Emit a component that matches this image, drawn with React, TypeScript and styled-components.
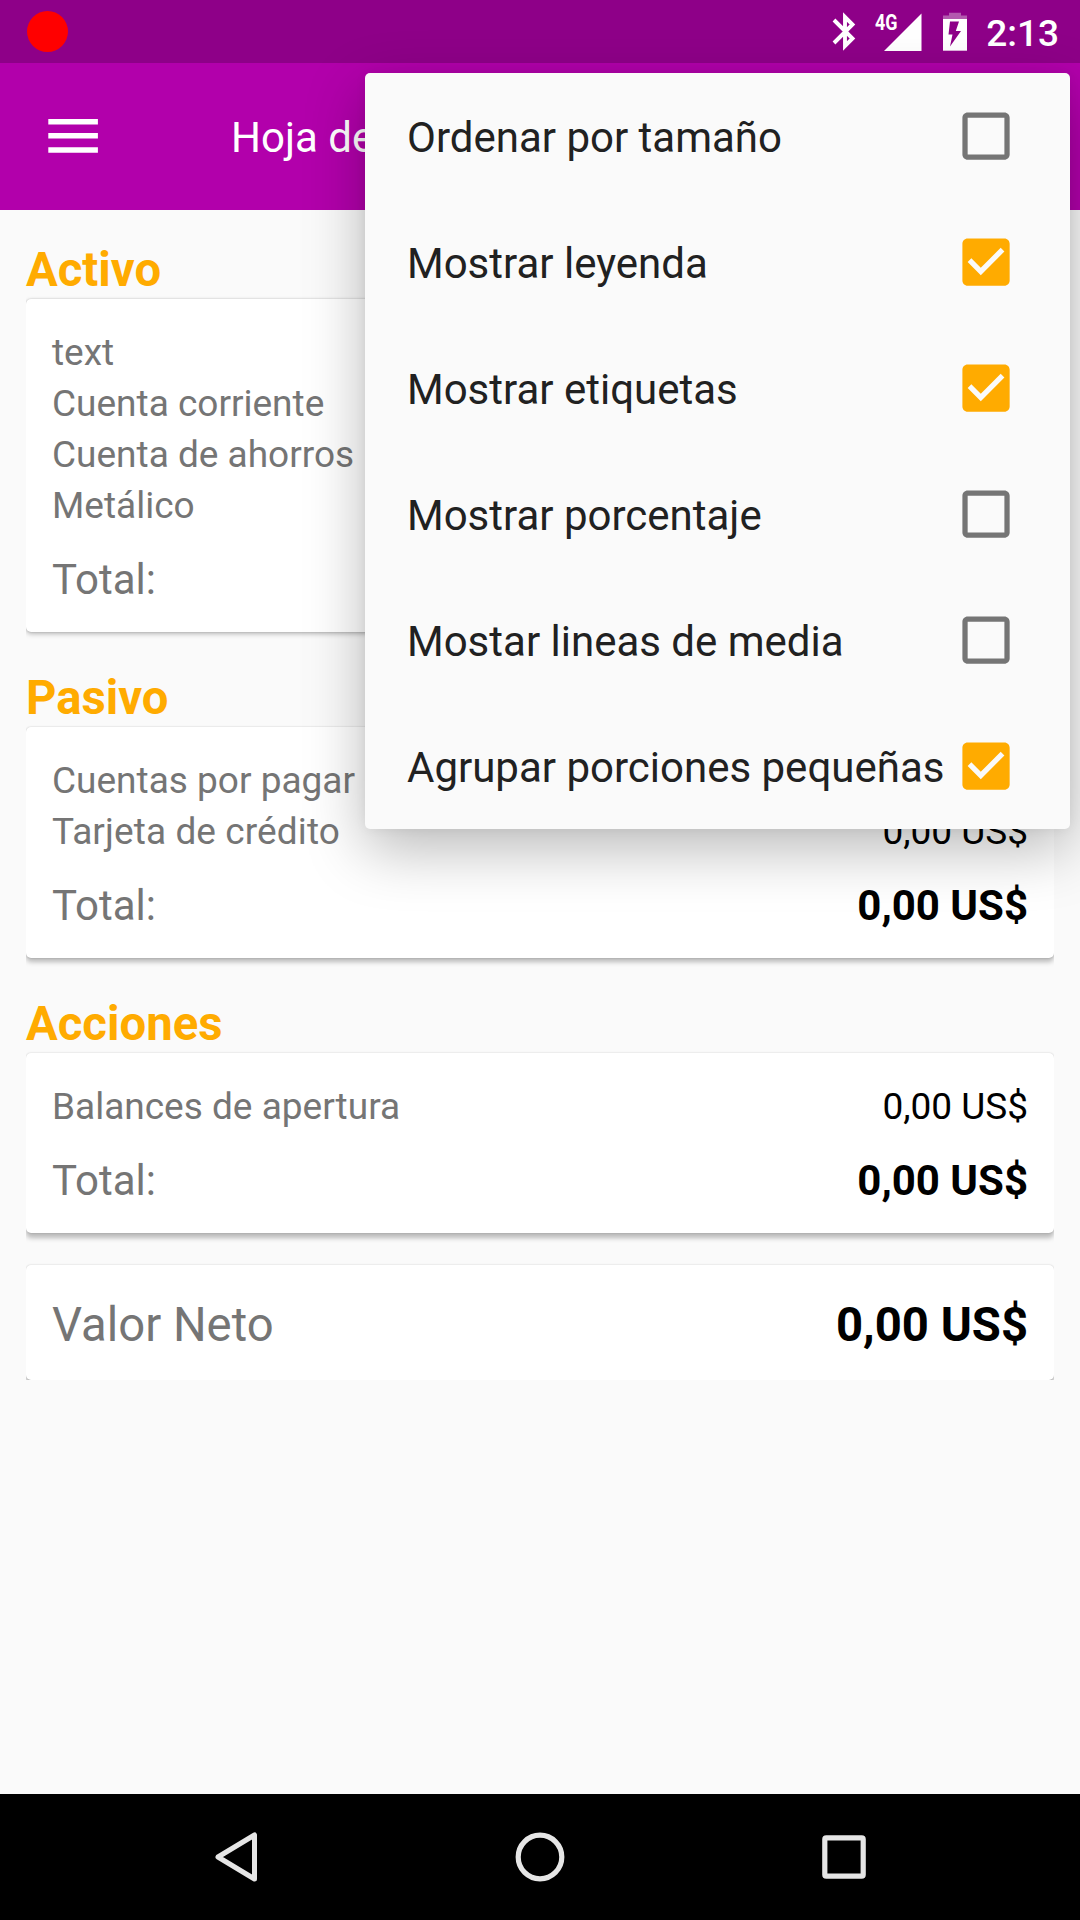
import React from "react";
import styled, { createGlobalStyle } from "styled-components";

const GlobalStyle = createGlobalStyle`
  *, *::before, *::after { box-sizing: border-box; }
  body { margin: 0; background: #fafafa; }
`;

const Screen = styled.div`
  position: relative;
  width: 1080px;
  height: 1920px;
  overflow: hidden;
  display: flex;
  flex-direction: column;
  background: #fafafa;
  font-family: Roboto, "Noto Sans", sans-serif;
  font-size: 42px;
  white-space: nowrap;
`;

const StatusBar = styled.header`
  display: flex;
  align-items: center;
  justify-content: space-between;
  flex: none;
  height: 63px;
  padding: 0 21px 0 27px;
  background: #8e0088;
  color: #fff;
`;

const RecordDot = styled.span`
  width: 41px;
  height: 41px;
  border-radius: 50%;
  background: #f00;
`;

const StatusIcons = styled.div`
  display: flex;
  align-items: center;
  height: 63px;
`;

const Clock = styled.time`
  margin-left: 19px;
  padding-top: 4px;
  font-size: 37px;
  font-weight: 500;
  line-height: 60px;
`;

const StatusSvg = styled.svg<{ $gap: number }>`
  display: block;
  flex: none;
  overflow: visible;
  margin-left: ${(p) => p.$gap}px;
`;

const AppBar = styled.div`
  display: flex;
  align-items: center;
  flex: none;
  height: 147px;
  padding-left: 42px;
  background: #b200ab;
  color: #fff;
`;

const MenuButton = styled.button`
  display: flex;
  width: 63px;
  height: 63px;
  padding: 0;
  border: 0;
  background: none;
`;

const Title = styled.h1`
  margin: 0 0 0 126px;
  padding-top: 2px;
  font-size: 42px;
  font-weight: 400;
  line-height: 58px;
`;

const Content = styled.main`
  display: flex;
  flex-direction: column;
  flex: 1;
  padding: 32px 26px 0;
`;

const SectionTitle = styled.h2`
  margin: 0;
  color: #ffab00;
  font-size: 47.25px;
  font-weight: 700;
  line-height: 57px;
`;

const Card = styled.section<{ $lift: number; $space: number; $flush?: boolean }>`
  margin-bottom: ${(p) => p.$space}px;
  padding: ${(p) => (p.$flush ? "27px 26px 24px" : "28px 26px 24px")};
  border-radius: 5px;
  background: #fff;
  box-shadow:
    0 0 2px rgba(0, 0, 0, 0.2),
    0 ${(p) => p.$lift}px 5px rgba(0, 0, 0, 0.26);
  clip-path: inset(-4px 0 ${(p) => (p.$flush ? 0 : -14)}px 0);
`;

const Row = styled.div`
  display: flex;
  justify-content: space-between;
  height: 51px;
  color: #757575;
  font-size: 37px;
  line-height: 51px;
`;

const TotalRow = styled(Row)`
  height: 58px;
  margin-top: 19px;
  font-size: 42px;
  line-height: 60px;
`;

const NetRow = styled(Row)`
  height: 64px;
  font-size: 47.25px;
  line-height: 66px;
`;

const Name = styled.span<{ $track?: number }>`
  letter-spacing: ${(p) => p.$track ?? 0}px;
`;

const Amount = styled.span<{ $bold?: boolean }>`
  color: #000;
  font-weight: ${(p) => (p.$bold ? 700 : 400)};
`;

const Popup = styled.div`
  position: absolute;
  top: 73px;
  left: 365px;
  width: 705px;
  border-radius: 5px;
  background: #fafafa;
  box-shadow:
    0 0 12px rgba(0, 0, 0, 0.05),
    0 20px 60px rgba(0, 0, 0, 0.28);
`;

const Option = styled.div`
  display: flex;
  align-items: center;
  justify-content: space-between;
  height: 126px;
  padding: 0 53px 0 42px;
  color: #212121;
`;

const OptionLabel = styled.span`
  padding-top: 3px;
  line-height: 60px;
`;

const CheckSvg = styled.svg`
  display: block;
  flex: none;
  width: 63px;
  height: 63px;
  margin-bottom: 1px;
`;

const NavBar = styled.nav`
  display: flex;
  justify-content: center;
  flex: none;
  height: 126px;
  background: #000;
`;

const NavButton = styled.button`
  display: flex;
  align-items: center;
  justify-content: center;
  width: 304px;
  height: 126px;
  padding: 0;
  border: 0;
  background: none;
`;

function Checkbox({ checked }: { checked: boolean }) {
  return (
    <CheckSvg viewBox="-0.2 -0.2 24 24">
      {checked ? (
        <path
          fill="#ffab00"
          d="M19 3H5c-1.11 0-2 .9-2 2v14c0 1.1.89 2 2 2h14c1.11 0 2-.9 2-2V5c0-1.1-.89-2-2-2zm-9 14l-5-5 1.41-1.41L10 14.17l7.59-7.59L19 8l-9 9z"
        />
      ) : (
        <path
          fill="#757575"
          d="M19 5v14H5V5h14m0-2H5c-1.1 0-2 .9-2 2v14c0 1.1.9 2 2 2h14c1.1 0 2-.9 2-2V5c0-1.1-.9-2-2-2z"
        />
      )}
    </CheckSvg>
  );
}

type Section = {
  title: string;
  lift: number;
  space: number;
  total?: string;
  rows: { name: string; amount?: string; track?: number }[];
};

const sections: Section[] = [
  {
    title: "Activo",
    lift: 2,
    space: 38,
    rows: [
      { name: "text" },
      { name: "Cuenta corriente" },
      { name: "Cuenta de ahorros" },
      { name: "Metálico" },
    ],
  },
  {
    title: "Pasivo",
    lift: 4,
    space: 38,
    total: "0,00 US$",
    rows: [
      { name: "Cuentas por pagar" },
      { name: "Tarjeta de crédito", amount: "0,00 US$", track: 0.1 },
    ],
  },
  {
    title: "Acciones",
    lift: 5,
    space: 32,
    total: "0,00 US$",
    rows: [{ name: "Balances de apertura", amount: "0,00 US$" }],
  },
];

const options = [
  { label: "Ordenar por tamaño", checked: false },
  { label: "Mostrar leyenda", checked: true },
  { label: "Mostrar etiquetas", checked: true },
  { label: "Mostrar porcentaje", checked: false },
  { label: "Mostar lineas de media", checked: false },
  { label: "Agrupar porciones pequeñas", checked: true },
];

export default function App() {
  return (
    <Screen>
      <GlobalStyle />
      <StatusBar>
        <RecordDot />
        <StatusIcons>
          <StatusSvg $gap={0} width="24" height="40" viewBox="0 0 24 40">
            <path
              d="M2 8L20.5 26.5L13 34V5L20.5 12.5L2 31"
              fill="none"
              stroke="#fff"
              strokeWidth="3.9"
            />
          </StatusSvg>
          <StatusSvg $gap={18} width="49" height="40" viewBox="0 0 49 40">
            <path d="M47.5 1.5V39H10z" fill="#fff" />
            <text
              x="1"
              y="18"
              fill="#fff"
              fontSize="22"
              fontWeight="700"
              textLength="22.5"
              lengthAdjust="spacingAndGlyphs"
            >
              4G
            </text>
          </StatusSvg>
          <StatusSvg $gap={20} width="24" height="40" viewBox="0 0 24 40">
            <path d="M6 .8H18V3.6H24V7.5H0V3.6H6z" fill="#b359af" />
            <path d="M0 7H24V38.7H0z" fill="#fff" />
            <path d="M7 9.5H16L12.8 19H18L7 34.5L9.5 22.5H5.5z" fill="#8e0088" />
          </StatusSvg>
          <Clock>2:13</Clock>
        </StatusIcons>
      </StatusBar>

      <AppBar>
        <MenuButton aria-label="Menu">
          <svg width="63" height="63" viewBox="0 0 63 63">
            <path
              d="M6.3 13.9h49.6v5.5H6.3zM6.3 28.1h49.6v5.5H6.3zM6.3 42.3h49.6v5.5H6.3z"
              fill="#fff"
            />
          </svg>
        </MenuButton>
        <Title>Hoja de</Title>
      </AppBar>

      <Content>
        {sections.map((s) => (
          <React.Fragment key={s.title}>
            <SectionTitle>{s.title}</SectionTitle>
            <Card $lift={s.lift} $space={s.space}>
              {s.rows.map((r) => (
                <Row key={r.name}>
                  <Name $track={r.track}>{r.name}</Name>
                  {r.amount && <Amount>{r.amount}</Amount>}
                </Row>
              ))}
              <TotalRow>
                <Name>Total:</Name>
                {s.total && <Amount $bold>{s.total}</Amount>}
              </TotalRow>
            </Card>
          </React.Fragment>
        ))}
        <Card $lift={5} $space={0} $flush>
          <NetRow>
            <Name>Valor Neto</Name>
            <Amount $bold>0,00 US$</Amount>
          </NetRow>
        </Card>
      </Content>

      <NavBar>
        <NavButton aria-label="Back">
          <svg width="50" height="56" viewBox="0 0 50 56">
            <path
              d="M43.5 6V50L7 28z"
              fill="none"
              stroke="#e6e6e6"
              strokeWidth="5"
              strokeLinejoin="round"
            />
          </svg>
        </NavButton>
        <NavButton aria-label="Home">
          <svg width="56" height="56" viewBox="0 0 56 56">
            <circle cx="28" cy="28" r="21.8" fill="none" stroke="#e6e6e6" strokeWidth="5.2" />
          </svg>
        </NavButton>
        <NavButton aria-label="Recents">
          <svg width="56" height="56" viewBox="0 0 56 56">
            <rect
              x="8.8"
              y="8.8"
              width="38.4"
              height="38.4"
              rx="1.5"
              fill="none"
              stroke="#e6e6e6"
              strokeWidth="5.2"
            />
          </svg>
        </NavButton>
      </NavBar>

      <Popup>
        {options.map((o) => (
          <Option key={o.label}>
            <OptionLabel>{o.label}</OptionLabel>
            <Checkbox checked={o.checked} />
          </Option>
        ))}
      </Popup>
    </Screen>
  );
}
